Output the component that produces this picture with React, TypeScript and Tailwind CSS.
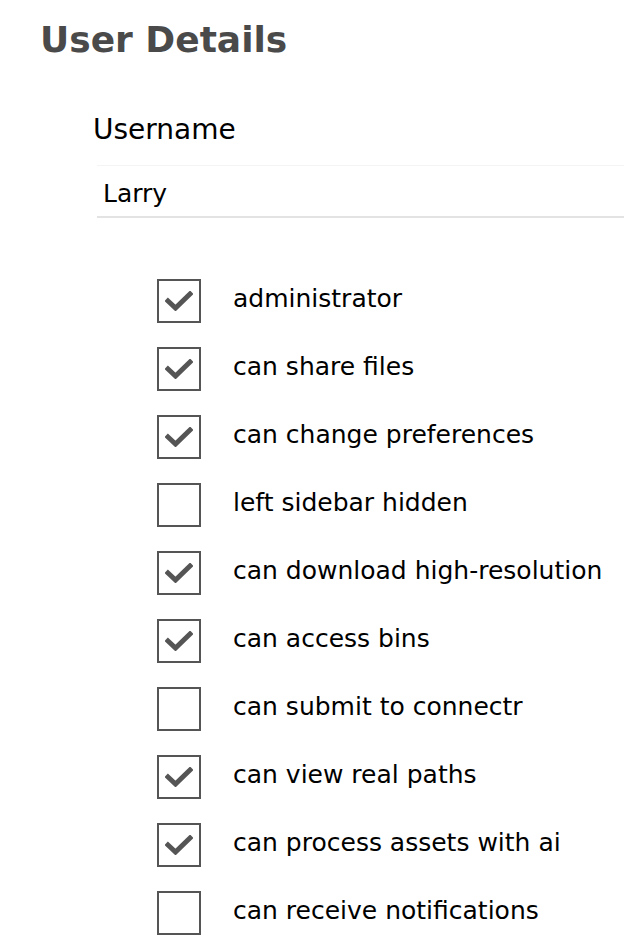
import { useState } from 'react'

const perms = [
  { label: 'administrator', on: true },
  { label: 'can share files', on: true },
  { label: 'can change preferences', on: true },
  { label: 'left sidebar hidden', on: false },
  { label: 'can download high-resolution', on: true },
  { label: 'can access bins', on: true },
  { label: 'can submit to connectr', on: false },
  { label: 'can view real paths', on: true },
  { label: 'can process assets with ai', on: true },
  { label: 'can receive notifications', on: false },
]

function Check() {
  return (
    <svg width="28" height="20" viewBox="0 0 28 20" className="block">
      <path d="M3 10 L10.5 17 L25 3" fill="none" stroke="#555" strokeWidth="5" strokeLinecap="square" strokeLinejoin="miter" />
    </svg>
  )
}

export default function App() {
  const [state, setState] = useState(perms.map((p) => p.on))

  return (
    <div className="min-h-[946px] bg-white font-['DejaVu_Sans',sans-serif] text-black">
      <h1 className="pl-[40px] pt-[14px] text-[36px] font-bold leading-[52px] text-[#4a4a4a]">User Details</h1>

      <div className="mt-[46px] pl-[93px]">
        <label className="block text-[28px] leading-[36px]">Username</label>
        <div className="mt-[17px] ml-[4px] flex h-[53px] items-center border-t border-t-[#f4f4f4] border-b-2 border-b-[#e3e3e3] pl-[6px] pt-[6px] text-[25px]">
          Larry
        </div>
      </div>

      <ul className="mt-[61px] pl-[157px]">
        {perms.map((p, i) => (
          <li key={p.label} className="flex h-[68px] items-start">
            <button
              type="button"
              onClick={() => setState((s) => s.map((v, j) => (j === i ? !v : v)))}
              className="flex h-[44px] w-[44px] shrink-0 items-center justify-center border-2 border-[#555] bg-white"
            >
              {state[i] ? <Check /> : null}
            </button>
            <span className="ml-[32px] text-[25px] leading-[40px]">{p.label}</span>
          </li>
        ))}
      </ul>
    </div>
  )
}
